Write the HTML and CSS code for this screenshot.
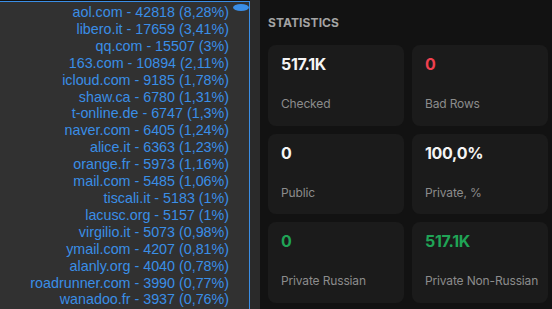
FILE: index.html
```html
<!DOCTYPE html>
<html lang="en">
<head>
  <meta charset="UTF-8">
  <title>Statistics</title>
  <link rel="stylesheet" href="styles.css">
</head>
<body>

  <!-- Domain list -->
  <div class="domains">
    <span class="thumb"></span>
    <div class="line">aol.com - 42818 (8,28%)</div>
    <div class="line">libero.it - 17659 (3,41%)</div>
    <div class="line">qq.com - 15507 (3%)</div>
    <div class="line">163.com - 10894 (2,11%)</div>
    <div class="line">icloud.com - 9185 (1,78%)</div>
    <div class="line">shaw.ca - 6780 (1,31%)</div>
    <div class="line">t-online.de - 6747 (1,3%)</div>
    <div class="line">naver.com - 6405 (1,24%)</div>
    <div class="line">alice.it - 6363 (1,23%)</div>
    <div class="line">orange.fr - 5973 (1,16%)</div>
    <div class="line">mail.com - 5485 (1,06%)</div>
    <div class="line">tiscali.it - 5183 (1%)</div>
    <div class="line">lacusc.org - 5157 (1%)</div>
    <div class="line">virgilio.it - 5073 (0,98%)</div>
    <div class="line">ymail.com - 4207 (0,81%)</div>
    <div class="line">alanly.org - 4040 (0,78%)</div>
    <div class="line">roadrunner.com - 3990 (0,77%)</div>
    <div class="line">wanadoo.fr - 3937 (0,76%)</div>
  </div>

  <div class="gutter"></div>

  <!-- Statistics -->
  <div class="main">
    <h3>STATISTICS</h3>
    <div class="cards">
      <div class="card"><div class="value">517.1K</div><div class="label">Checked</div></div>
      <div class="card"><div class="value red">0</div><div class="label">Bad Rows</div></div>
      <div class="card"><div class="value">0</div><div class="label">Public</div></div>
      <div class="card"><div class="value">100,0%</div><div class="label">Private, %</div></div>
      <div class="card"><div class="value green">0</div><div class="label">Private Russian</div></div>
      <div class="card"><div class="value green">517.1K</div><div class="label">Private Non-Russian</div></div>
    </div>
  </div>

</body>
</html>
```

FILE: styles.css
```css
body {
  margin: 0;
  height: 309px;
  overflow: hidden;
  display: flex;
  background: #121212;
  font-family: 'Inter', sans-serif;
}

.domains {
  position: relative;
  width: 230px;
  padding: 2px 20px 0 0;
  margin-top: 1px;
  background: #313131;
  border-top: 1px solid #3a8ee6;
  border-right: 1px solid #3a8ee6;
  font-family: 'Liberation Sans', Arial, sans-serif;
  font-size: 14.3px;
  line-height: 16.9px;
  color: #3a8ee6;
  text-align: right;
}

.thumb {
  position: absolute;
  top: 2px;
  right: 0;
  width: 16px;
  height: 7px;
  border-radius: 50%;
  background: #3a8ee6;
}

.gutter {
  width: 10px;
  background: #2a2a2a;
}

.main {
  flex: 1;
  padding: 0 4px 0 8px;
}

h3 {
  margin: 15px 0 15px;
  font-size: 12px;
  font-weight: 700;
  color: #a3a3a3;
  letter-spacing: 0.1px;
}

.cards {
  display: grid;
  grid-template-columns: 136px 136px;
  grid-auto-rows: 80.5px;
  gap: 8px;
}

.card {
  background: #1b1b1b;
  border-radius: 8px;
  padding: 9px 0 0 13px;
  white-space: nowrap;
}

.value {
  font-size: 16px;
  line-height: 20px;
  font-weight: 700;
  letter-spacing: -0.3px;
  color: #f5f5f5;
}

.value.red {
  color: #f0404f;
}

.value.green {
  color: #20a456;
}

.label {
  margin-top: 22px;
  font-size: 12px;
  line-height: 16px;
  letter-spacing: -0.15px;
  color: #8c8c8c;
}
```
